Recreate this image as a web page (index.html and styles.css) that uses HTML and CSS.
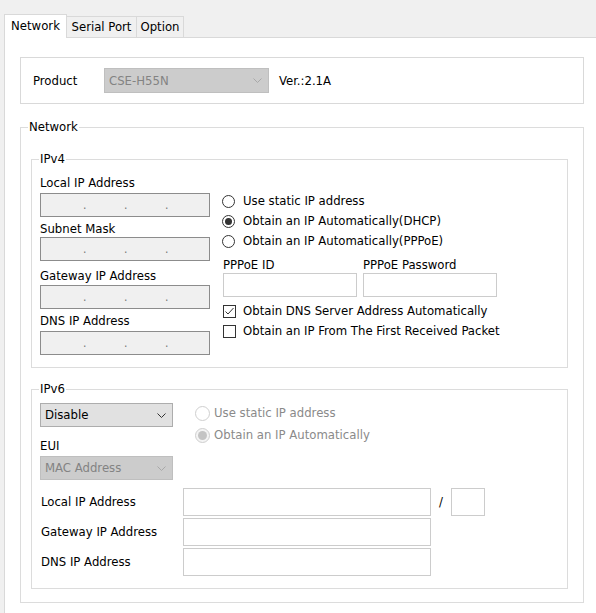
FILE: index.html
```html
<!DOCTYPE html>
<html>
<head>
<meta charset="utf-8">
<link rel="stylesheet" href="styles.css">
</head>
<body>
<div class="tabs">
  <div class="tab tab-active">Network</div>
  <div class="tab tab-serial">Serial Port</div>
  <div class="tab tab-option">Option</div>
</div>
<div class="panel">
  <div class="product">
    <span class="product-label">Product</span>
    <div class="select select-dis select-product">
      <span>CSE-H55N</span>
      <svg class="chev" width="9" height="5" viewBox="0 0 9 5"><polyline points="0.5,0.5 4.5,4.5 8.5,0.5" fill="none" stroke="#a8a8a8" stroke-width="1"/></svg>
    </div>
    <span class="ver">Ver.:2.1A</span>
  </div>

  <div class="group net">
    <span class="legend legend-net">Network</span>

    <div class="group ipv4">
      <span class="legend">IPv4</span>
      <div class="ipv4-body">
        <div class="col-left">
          <div class="lbl l1">Local IP Address</div>
          <div class="ipbox i1"><span class="seg"></span><span class="dot">.</span><span class="seg"></span><span class="dot">.</span><span class="seg"></span><span class="dot">.</span><span class="seg"></span></div>
          <div class="lbl l2">Subnet Mask</div>
          <div class="ipbox i2"><span class="seg"></span><span class="dot">.</span><span class="seg"></span><span class="dot">.</span><span class="seg"></span><span class="dot">.</span><span class="seg"></span></div>
          <div class="lbl l3">Gateway IP Address</div>
          <div class="ipbox i3"><span class="seg"></span><span class="dot">.</span><span class="seg"></span><span class="dot">.</span><span class="seg"></span><span class="dot">.</span><span class="seg"></span></div>
          <div class="lbl l4">DNS IP Address</div>
          <div class="ipbox i4"><span class="seg"></span><span class="dot">.</span><span class="seg"></span><span class="dot">.</span><span class="seg"></span><span class="dot">.</span><span class="seg"></span></div>
        </div>
        <div class="col-right">
          <div class="opt"><span class="radio"></span>Use static IP address</div>
          <div class="opt"><span class="radio radio-on"></span>Obtain an IP Automatically(DHCP)</div>
          <div class="opt"><span class="radio"></span>Obtain an IP Automatically(PPPoE)</div>
          <div class="pppoe">
            <div class="pppoe-col">
              <div class="lbl">PPPoE ID</div>
              <div class="tbox pppoe-box"></div>
            </div>
            <div class="pppoe-col">
              <div class="lbl">PPPoE Password</div>
              <div class="tbox pppoe-box"></div>
            </div>
          </div>
          <div class="chk chk-first"><span class="check"><svg width="11" height="11" viewBox="0 0 11 11"><polyline points="1.5,5.5 4,8 9.5,2" fill="none" stroke="#333" stroke-width="1"/></svg></span>Obtain DNS Server Address Automatically</div>
          <div class="chk"><span class="check"></span>Obtain an IP From The First Received Packet</div>
        </div>
      </div>
    </div>

    <div class="group ipv6">
      <span class="legend">IPv6</span>
      <div class="ipv6-top">
        <div class="ipv6-left">
          <div class="select select-en select-v6">
            <span>Disable</span>
            <svg class="chev" width="9" height="5" viewBox="0 0 9 5"><polyline points="0.5,0.5 4.5,4.5 8.5,0.5" fill="none" stroke="#333" stroke-width="1"/></svg>
          </div>
          <div class="lbl eui">EUI</div>
          <div class="select select-dis select-v6 mac">
            <span>MAC Address</span>
            <svg class="chev" width="9" height="5" viewBox="0 0 9 5"><polyline points="0.5,0.5 4.5,4.5 8.5,0.5" fill="none" stroke="#a8a8a8" stroke-width="1"/></svg>
          </div>
        </div>
        <div class="ipv6-right">
          <div class="opt6"><span class="radio6"></span>Use static IP address</div>
          <div class="opt6"><span class="radio6 radio6-on"></span>Obtain an IP Automatically</div>
        </div>
      </div>
      <div class="v6rows">
        <div class="v6row">
          <span class="v6lbl">Local IP Address</span>
          <div class="tbox v6box"></div>
          <span class="slash">/</span>
          <div class="tbox prefix"></div>
        </div>
        <div class="v6row">
          <span class="v6lbl">Gateway IP Address</span>
          <div class="tbox v6box"></div>
        </div>
        <div class="v6row">
          <span class="v6lbl">DNS IP Address</span>
          <div class="tbox v6box"></div>
        </div>
      </div>
    </div>
  </div>
</div>
</body>
</html>
```

FILE: styles.css
```css
* { box-sizing: border-box; }
html, body { margin: 0; padding: 0; }
body {
  background: #f0f0f0;
  font-family: "DejaVu Sans Condensed", "DejaVu Sans", sans-serif;
  font-size: 13px;
  color: #000;
  width: 596px;
  height: 613px;
  overflow: hidden;
  line-height: 16px;
}

/* tabs */
.tabs { display: flex; align-items: flex-end; height: 38px; padding-left: 4px; }
.tab {
  height: 21px; margin-bottom: 1px;
  border: 1px solid #d9d9d9; border-bottom: none; border-left: none;
  background: #f0f0f0;
  display: flex; align-items: center; justify-content: center;
}
.tab-active {
  width: 63px; height: 24px; margin-bottom: 0;
  border-left: 1px solid #d9d9d9;
  background: #fff;
  position: relative; z-index: 1;
  padding-bottom: 2px;
}
.tab-serial { width: 70px; }
.tab-option { width: 47px; }

.panel {
  margin-top: -1px; margin-left: 4px;
  background: #fff;
  border-top: 1px solid #d9d9d9; border-left: 1px solid #d9d9d9;
  height: 576px;
  padding: 19px 0 0 15px;
}

/* product */
.product {
  width: 564px; height: 47px;
  border: 1px solid #d9d9d9;
  display: flex; align-items: center;
  padding: 1px 0 0 12px;
}
.product-label { width: 71px; }
.ver { margin-left: 10px; }

.select {
  display: flex; align-items: center; justify-content: space-between;
  padding: 0 6px 0 4px;
  border: 1px solid #adadad; background: #e1e1e1;
}
.select-dis { background: #cccccc; border-color: #bfbfbf; color: #838383; }
.select-product { width: 165px; height: 25px; margin-top: -1px; }
.chev { flex: none; }

/* groups */
.group { border: 1px solid #dcdcdc; }
.legend {
  display: block; width: max-content;
  margin: -9px 0 0 -1px; padding: 0 1px;
  background: #fff; line-height: 16px;
}
.legend-net { margin-left: -3px; }
.net { width: 564px; margin-top: 23px; padding: 0 15px 13px 10px; }
.ipv4 { margin-top: 24px; padding: 0 0 12px 8px; }
.ipv4-body { display: flex; margin-top: 8px; }

.col-left { width: 170px; }
.lbl { line-height: 16px; }
.ipbox {
  width: 170px; height: 24px;
  border: 1px solid #8c8c8c; background: #f0f0f0;
  display: flex; align-items: center; padding-left: 4px;
}
.seg { width: 38px; }
.dot { width: 3px; text-align: center; color: #777; font-size: 12px; }
.i1 { margin-top: 2px; }
.l2 { margin-top: 4px; }
.i2 { margin-top: 0; }
.l3 { margin-top: 7px; }
.i3 { margin-top: 1px; }
.l4 { margin-top: 4px; }
.i4 { margin-top: 2px; }

.col-right { margin-left: 12px; padding-top: 16px; }
.opt { height: 20px; display: flex; align-items: center; }
.radio {
  flex: none;
  width: 13px; height: 13px; border-radius: 50%;
  border: 1px solid #333; background: #fff;
  display: flex; align-items: center; justify-content: center;
  margin-right: 8px;
}
.radio-on::after { content: ""; width: 7px; height: 7px; border-radius: 50%; background: #333; }

.pppoe { display: flex; gap: 6px; margin: 6px 0 0 1px; }
.pppoe-col { width: 134px; }
.tbox { border: 1px solid #cccccc; background: #fff; }
.pppoe-box { height: 24px; }

.chk { height: 20px; display: flex; align-items: center; margin-left: 1px; }
.chk-first { margin-top: 4px; }
.check {
  flex: none;
  width: 13px; height: 13px;
  border: 1px solid #333; background: #fff;
  margin-right: 7px;
  display: flex; align-items: center; justify-content: center;
}
.check svg { display: block; }

/* ipv6 */
.ipv6 { margin-top: 21px; padding: 0 0 12px 8px; }
.ipv6-top { display: flex; align-items: flex-start; margin-top: 6px; }
.ipv6-left { width: 133px; }
.select-v6 { width: 133px; height: 24px; }
.eui { margin-top: 11px; }
.mac { margin-top: 2px; }
.ipv6-right { margin-left: 22px; margin-top: -1px; color: #8a8a8a; }
.opt6 { height: 22px; display: flex; align-items: center; }
.radio6 {
  flex: none;
  width: 15px; height: 15px; border-radius: 50%;
  border: 1px solid #cfcfcf; background: #fff;
  display: flex; align-items: center; justify-content: center;
  margin-right: 4px;
}
.radio6-on { background: #f4f4f4; }
.radio6-on::after { content: ""; width: 9px; height: 9px; border-radius: 50%; background: #c4c4c4; }

.v6rows { margin-top: 8px; display: flex; flex-direction: column; gap: 2px; }
.v6row { display: flex; align-items: center; height: 28px; }
.v6lbl { width: 143px; padding-left: 1px; }
.v6box { width: 248px; height: 28px; }
.slash { width: 20px; text-align: center; }
.prefix { width: 34px; height: 28px; }
```
